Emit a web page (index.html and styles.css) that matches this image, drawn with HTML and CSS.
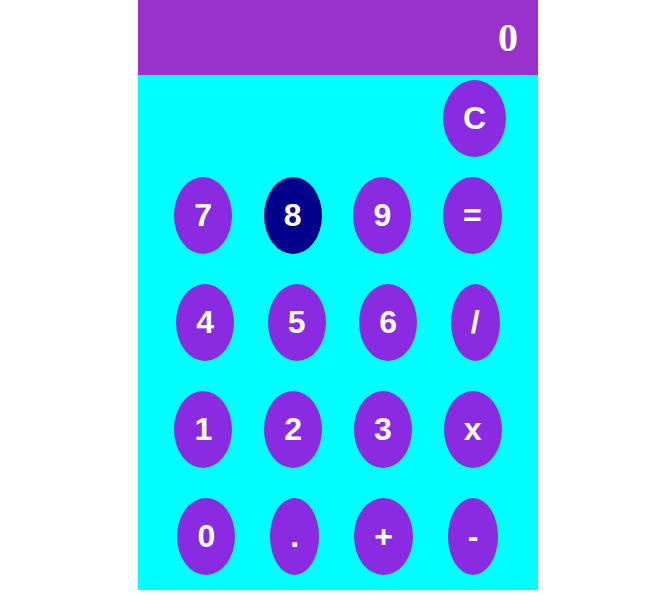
FILE: index.html
```html
<!DOCTYPE html>
<html>
<head>
<meta charset="utf-8">
<link rel="stylesheet" href="styles.css">
</head>
<body>
<div class="calc">
  <div class="display">0</div>
  <div class="keys">
    <div class="row row-top">
      <span class="key">C</span>
    </div>
    <div class="row">
      <span class="key">7</span>
      <span class="key key-active">8</span>
      <span class="key">9</span>
      <span class="key">=</span>
    </div>
    <div class="row">
      <span class="key">4</span>
      <span class="key">5</span>
      <span class="key">6</span>
      <span class="key">/</span>
    </div>
    <div class="row">
      <span class="key">1</span>
      <span class="key">2</span>
      <span class="key">3</span>
      <span class="key">x</span>
    </div>
    <div class="row">
      <span class="key">0</span>
      <span class="key">.</span>
      <span class="key">+</span>
      <span class="key">-</span>
    </div>
  </div>
</div>
</body>
</html>
```

FILE: styles.css
```css
html, body {
  margin: 0;
  background: #ffffff;
}
body {
  padding-left: 11px;
}
.calc {
  width: 400px;
  margin: 0 auto;
  background: #00ffff;
}
.display {
  background: #9932cc;
  color: #ffffff;
  font-family: "Liberation Serif", "Times New Roman", serif;
  font-weight: bold;
  font-size: 40px;
  line-height: 45px;
  height: 45px;
  padding: 15px 20px 15px 20px;
  text-align: right;
}
.keys {
  display: flex;
  flex-direction: column;
  padding: 0 4.5px;
}
.row {
  display: flex;
  justify-content: space-evenly;
  align-items: center;
  margin: 15px 0;
}
.row-top {
  justify-content: flex-end;
  margin: 5px 0;
  padding-right: 27.5px;
}
.key {
  display: inline-block;
  background: #8a2be2;
  color: #ffffff;
  font-family: "Liberation Sans", Arial, sans-serif;
  font-weight: bold;
  font-size: 32px;
  padding: 20px;
  border-radius: 50%;
}
.key-active {
  background: #00008b;
}
```
